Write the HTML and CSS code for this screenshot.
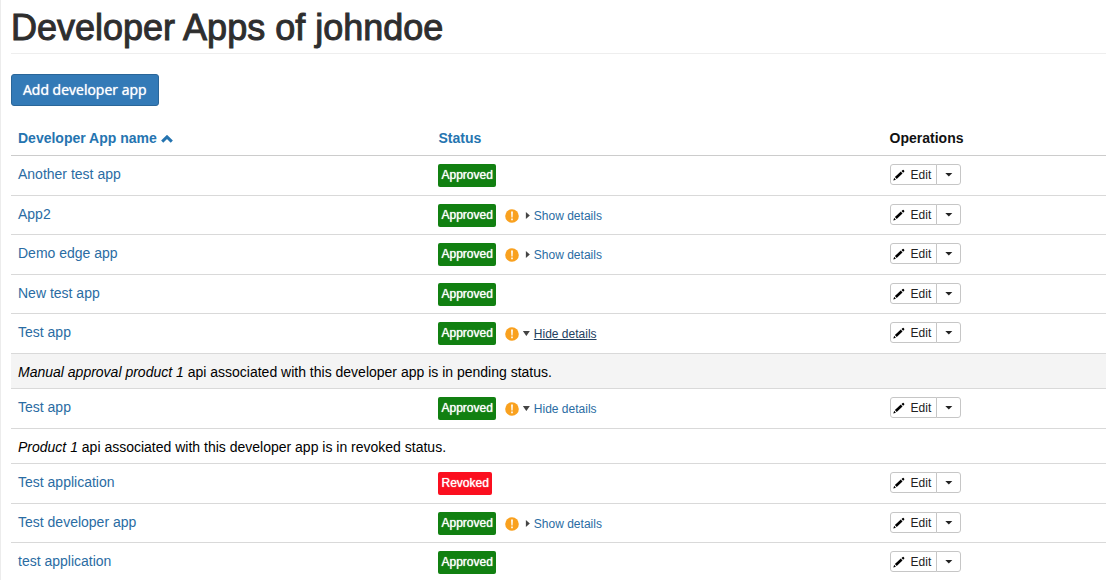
FILE: index.html
```html
<!DOCTYPE html>
<html lang="en">
<head>
<meta charset="utf-8">
<title>Developer Apps of johndoe</title>
<link rel="stylesheet" href="styles.css">
</head>
<body>
<svg class="sprite" aria-hidden="true">
  <symbol id="pencil" viewBox="0 0 12 12"><path d="M0.3 11.6L1.2 8.8L2.9 10.7ZM1.9 8L7.8 2.6L9.5 4.5L3.7 9.9ZM8.5 1.9L9.7 0.9Q10.2 0.5 10.6 1L11.2 1.7Q11.6 2.2 11.2 2.7L10.1 3.8Z"/></symbol>
  <symbol id="warning" viewBox="0 0 14 14"><circle cx="7" cy="7" r="6.8" fill="#f9a11f"/><path d="M6.1 2.6H7.9L7.6 8.4H6.4ZM6.2 9.6H7.8V11.2H6.2Z" fill="#fff"/></symbol>
</svg>
<main class="page">
  <h1 class="page-title">Developer Apps of johndoe</h1>
  <a class="add-button" href="#">Add developer app</a>
  <table class="apps">
    <colgroup><col class="col-name"><col class="col-status"><col></colgroup>
    <thead>
      <tr>
        <th scope="col"><a class="sort" href="#">Developer App name <svg class="chevron" viewBox="0 0 12 8" aria-hidden="true"><path d="M1.2 6.6L6 1.9L10.8 6.6"/></svg></a></th>
        <th scope="col"><a href="#">Status</a></th>
        <th scope="col">Operations</th>
      </tr>
    </thead>
    <tbody>
      <tr>
        <td><a href="#">Another test app</a></td>
        <td><div class="status"><span class="badge">Approved</span></div></td>
        <td><div class="ops"><button class="edit" type="button"><svg class="pencil" aria-hidden="true"><use href="#pencil"/></svg>Edit</button><button class="toggle" type="button" aria-label="More operations"></button></div></td>
      </tr>
      <tr>
        <td><a href="#">App2</a></td>
        <td><div class="status"><span class="badge">Approved</span><svg class="warning" aria-hidden="true"><use href="#warning"/></svg><button class="details" type="button" aria-expanded="false">Show details</button></div></td>
        <td><div class="ops"><button class="edit" type="button"><svg class="pencil" aria-hidden="true"><use href="#pencil"/></svg>Edit</button><button class="toggle" type="button" aria-label="More operations"></button></div></td>
      </tr>
      <tr>
        <td><a href="#">Demo edge app</a></td>
        <td><div class="status"><span class="badge">Approved</span><svg class="warning" aria-hidden="true"><use href="#warning"/></svg><button class="details" type="button" aria-expanded="false">Show details</button></div></td>
        <td><div class="ops"><button class="edit" type="button"><svg class="pencil" aria-hidden="true"><use href="#pencil"/></svg>Edit</button><button class="toggle" type="button" aria-label="More operations"></button></div></td>
      </tr>
      <tr>
        <td><a href="#">New test app</a></td>
        <td><div class="status"><span class="badge">Approved</span></div></td>
        <td><div class="ops"><button class="edit" type="button"><svg class="pencil" aria-hidden="true"><use href="#pencil"/></svg>Edit</button><button class="toggle" type="button" aria-label="More operations"></button></div></td>
      </tr>
      <tr>
        <td><a href="#">Test app</a></td>
        <td><div class="status"><span class="badge">Approved</span><svg class="warning" aria-hidden="true"><use href="#warning"/></svg><button class="details active" type="button" aria-expanded="true"><span class="details-text">Hide details</span></button></div></td>
        <td><div class="ops"><button class="edit" type="button"><svg class="pencil" aria-hidden="true"><use href="#pencil"/></svg>Edit</button><button class="toggle" type="button" aria-label="More operations"></button></div></td>
      </tr>
      <tr class="note shaded">
        <td colspan="3"><em>Manual approval product 1</em> api associated with this developer app is in pending status.</td>
      </tr>
      <tr>
        <td><a href="#">Test app</a></td>
        <td><div class="status"><span class="badge">Approved</span><svg class="warning" aria-hidden="true"><use href="#warning"/></svg><button class="details" type="button" aria-expanded="true">Hide details</button></div></td>
        <td><div class="ops"><button class="edit" type="button"><svg class="pencil" aria-hidden="true"><use href="#pencil"/></svg>Edit</button><button class="toggle" type="button" aria-label="More operations"></button></div></td>
      </tr>
      <tr class="note">
        <td colspan="3"><em>Product 1</em> api associated with this developer app is in revoked status.</td>
      </tr>
      <tr>
        <td><a href="#">Test application</a></td>
        <td><div class="status"><span class="badge revoked">Revoked</span></div></td>
        <td><div class="ops"><button class="edit" type="button"><svg class="pencil" aria-hidden="true"><use href="#pencil"/></svg>Edit</button><button class="toggle" type="button" aria-label="More operations"></button></div></td>
      </tr>
      <tr>
        <td><a href="#">Test developer app</a></td>
        <td><div class="status"><span class="badge">Approved</span><svg class="warning" aria-hidden="true"><use href="#warning"/></svg><button class="details" type="button" aria-expanded="false">Show details</button></div></td>
        <td><div class="ops"><button class="edit" type="button"><svg class="pencil" aria-hidden="true"><use href="#pencil"/></svg>Edit</button><button class="toggle" type="button" aria-label="More operations"></button></div></td>
      </tr>
      <tr class="last">
        <td><a href="#">test application</a></td>
        <td><div class="status"><span class="badge">Approved</span></div></td>
        <td><div class="ops"><button class="edit" type="button"><svg class="pencil" aria-hidden="true"><use href="#pencil"/></svg>Edit</button><button class="toggle" type="button" aria-label="More operations"></button></div></td>
      </tr>
    </tbody>
  </table>
</main>
</body>
</html>
```

FILE: styles.css
```css
* {
  box-sizing: border-box;
}

body {
  margin: 0;
  background: #fff;
  color: #111;
  font: 14px/20px "Liberation Sans", Arial, sans-serif;
}

button {
  margin: 0;
  font-family: inherit;
  cursor: pointer;
}

a {
  color: #2a6ca3;
  text-decoration: none;
}

.sprite {
  display: none;
}

.page {
  padding: 8px 7px 0 10px;
  border-left: 1px solid #ececec;
}

.page-title {
  margin: 0 0 20px;
  padding-bottom: 5px;
  border-bottom: 1px solid #eee;
  color: #2e2e2e;
  font-size: 36px;
  font-weight: 500;
  line-height: 40px;
  -webkit-text-stroke: 1px #2e2e2e;
}

.add-button {
  display: inline-block;
  padding: 5px 11px;
  border: 1px solid #2a6699;
  border-radius: 3px;
  background: #337ab7;
  color: #fff;
  font: 500 14px/20px "Open Sans", sans-serif;
  text-shadow: 0 0 1px #fff;
}

.apps {
  width: 100%;
  margin-top: 15px;
  table-layout: fixed;
  border-spacing: 0;
}

.col-name {
  width: 38.4%;
}

.col-status {
  width: 41.2%;
}

.apps th {
  height: 35px;
  padding: 0 7px;
  border-bottom: 1px solid #ccc;
  text-align: left;
  vertical-align: middle;
}

.apps th a {
  color: #2574b0;
}

.chevron {
  width: 12px;
  height: 8px;
  fill: none;
  stroke: #2574b0;
  stroke-width: 3;
}

.apps td {
  height: 39px;
  padding: 8px 7px 0;
  border-bottom: 1px solid #d9d9d9;
  vertical-align: top;
}

.apps tr:nth-child(odd) td {
  height: 40px;
}

.apps .note td {
  height: 35px;
  color: #000;
}

.apps .shaded td {
  background: #f4f4f4;
}

.apps .last td {
  border-bottom: 0;
}

.status {
  display: flex;
  align-items: center;
}

.badge {
  padding: 0 3px;
  border-radius: 2px;
  background: #118011;
  color: #fff;
  font-size: 12px;
  line-height: 23px;
  text-shadow: 0 0 1px #fff;
}

.revoked {
  background: #fb0f1f;
}

.warning {
  width: 14px;
  height: 14px;
  margin: 0 6px 0 9px;
}

.details {
  display: flex;
  align-items: center;
  padding: 0;
  border: 0;
  background: none;
  color: #2a6ca3;
  font-size: 12px;
  line-height: 16px;
}

.details::before {
  content: "";
  width: 7px;
  height: 7px;
  margin-right: 2px;
  background: #444;
  clip-path: polygon(1px 0, 5px 50%, 1px 100%);
}

.details[aria-expanded="true"]::before {
  height: 5px;
  margin-left: -2px;
  margin-right: 4px;
  clip-path: polygon(0 0, 7px 0, 50% 100%);
}

.active {
  color: #23405f;
}

.details-text {
  text-decoration: underline;
}

.ops {
  display: flex;
}

.edit,
.toggle {
  display: flex;
  align-items: center;
  height: 21px;
  border: 1px solid #c6c6c6;
  background: #fff;
  color: #222;
  font-size: 12px;
}

.edit {
  gap: 6px;
  padding: 0 5px 0 2px;
  border-radius: 3px 0 0 3px;
}

.pencil {
  width: 12px;
  height: 12px;
}

.toggle {
  justify-content: center;
  width: 25px;
  margin-left: -1px;
  padding: 0;
  border-radius: 0 3px 3px 0;
}

.toggle::before {
  content: "";
  width: 8px;
  height: 4px;
  background: #222;
  clip-path: polygon(0 0, 100% 0, 50% 100%);
}
```
